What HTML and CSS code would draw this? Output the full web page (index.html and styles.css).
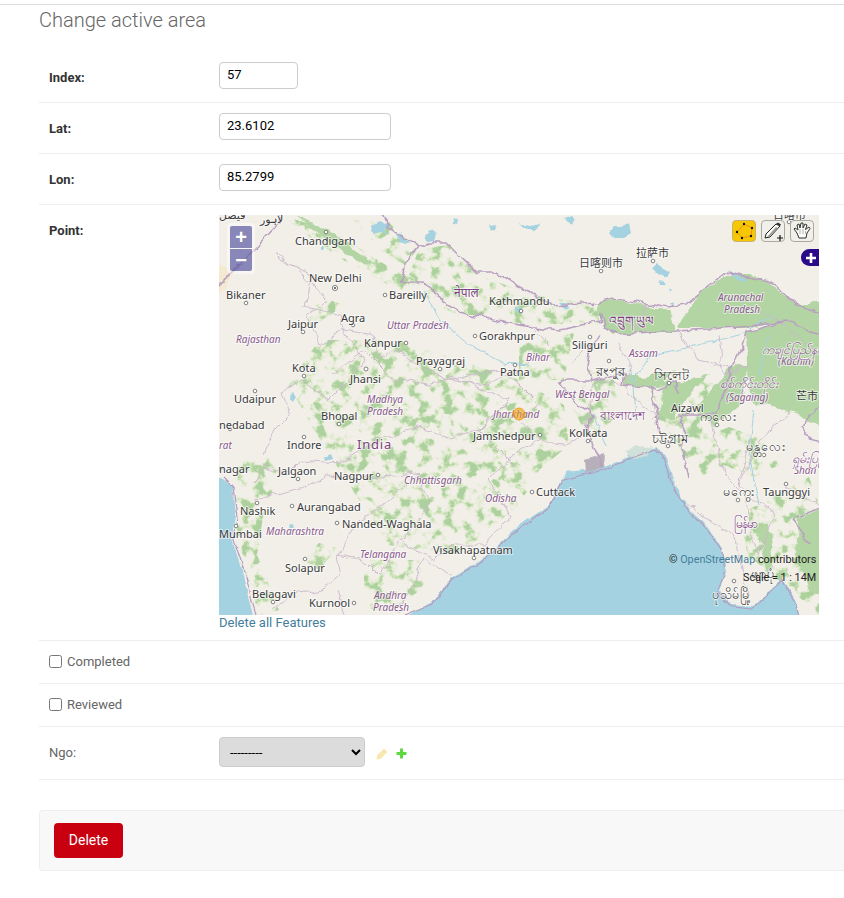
FILE: index.html
```html
<!DOCTYPE html>
<html lang="en">
<head>
<meta charset="utf-8">
<title>Change active area</title>
<link rel="stylesheet" href="styles.css">
</head>
<body>
<div class="topline"></div>
<main class="content">
  <h1 class="title">Change active area</h1>
  <form class="form">
    <div class="row">
      <label class="label strong">Index:</label>
      <input class="input short" type="text" value="57">
    </div>
    <div class="row">
      <label class="label strong">Lat:</label>
      <input class="input long" type="text" value="23.6102">
    </div>
    <div class="row">
      <label class="label strong">Lon:</label>
      <input class="input long" type="text" value="85.2799">
    </div>
    <div class="row maprow">
      <label class="label strong">Point:</label>
      <div class="mapcol">
        <div class="map">
          <svg class="mapsvg" viewBox="0 0 600 400" width="600" height="400">
            <defs>
              <filter id="rough" filterUnits="userSpaceOnUse" x="-30" y="-30" width="660" height="460" color-interpolation-filters="sRGB">
                <feTurbulence type="fractalNoise" baseFrequency=".07" numOctaves="3" seed="4" result="n"/>
                <feDisplacementMap in="SourceGraphic" in2="n" scale="9" xChannelSelector="R" yChannelSelector="G"/>
                <feGaussianBlur stdDeviation=".35"/>
              </filter>
              <filter id="finer" filterUnits="userSpaceOnUse" x="-30" y="-30" width="660" height="460" color-interpolation-filters="sRGB">
                <feTurbulence type="fractalNoise" baseFrequency=".1" numOctaves="3" seed="9" result="n"/>
                <feDisplacementMap in="SourceGraphic" in2="n" scale="5" xChannelSelector="R" yChannelSelector="G"/>
                <feGaussianBlur stdDeviation=".3"/>
              </filter>
              <filter id="mottlelight" filterUnits="userSpaceOnUse" x="-30" y="-30" width="660" height="460" color-interpolation-filters="sRGB">
                <feTurbulence type="fractalNoise" baseFrequency=".085" numOctaves="4" seed="7" result="n"/>
                <feColorMatrix in="n" type="matrix" values="0 0 0 0 0  0 0 0 0 0  0 0 0 0 0  9 0 0 0 -4.3" result="a"/>
                <feComposite in="SourceGraphic" in2="a" operator="in"/>
                <feGaussianBlur stdDeviation=".45"/>
              </filter>
              <filter id="mottledark" filterUnits="userSpaceOnUse" x="-30" y="-30" width="660" height="460" color-interpolation-filters="sRGB">
                <feTurbulence type="fractalNoise" baseFrequency=".085" numOctaves="4" seed="7" result="n"/>
                <feColorMatrix in="n" type="matrix" values="0 0 0 0 0  0 0 0 0 0  0 0 0 0 0  10 0 0 0 -5.7" result="a"/>
                <feComposite in="SourceGraphic" in2="a" operator="in"/>
                <feGaussianBlur stdDeviation=".45"/>
              </filter>
              <g id="veg">
                <path d="M62 0L100 12 135 30 170 52 200 66 240 85 262 100 240 100 205 85 170 70 135 52 95 25Z"/>
                <path d="M135 5L170 8 200 32 186 50 165 38Z"/>
                <path d="M200 34L230 30 265 62 300 75 300 108 262 100 225 82 190 60Z"/>
                <path d="M300 78L380 90 380 110 300 108Z"/>
                <path d="M85 95L110 85 125 90 100 108 85 110Z"/>
                <path d="M100 125L180 125 300 165 345 190 350 230 320 255 300 290 240 340 170 330 125 262 95 215 70 170Z"/>
                <path d="M20 250L45 235 60 260 45 295 38 340 60 395 40 400 25 350 15 300Z"/>
                <path d="M85 345L100 328 118 333 100 355Z"/>
                <path d="M145 345L200 345 205 372 170 398 145 392Z"/>
                <path d="M300 130L355 118 345 165 300 165Z"/>
                <path d="M370 155L395 165 400 200 370 225 355 195Z"/>
                <path d="M430 160L505 170 495 215 480 262 460 232 440 205Z"/>
                <path d="M460 232L510 212 545 225 560 250 535 262 505 250 480 262Z"/>
                <path d="M520 300L590 262 600 290 590 340 530 345Z"/>
                <path d="M535 345L580 340 600 362 600 400 580 382Z"/>
                <path d="M335 205L345 225 320 255 305 262 320 225Z"/>
              </g>
            </defs>
            <rect width="600" height="400" fill="#f2efe9"/>
            <path class="desert" d="M-20 45L16 55 6 74 -20 90Z" filter="url(#finer)"/>
            <use href="#veg" class="vegl" filter="url(#mottlelight)"/>
            <use href="#veg" class="vegd" filter="url(#mottledark)"/>
            <g class="wood" filter="url(#rough)">
              <path d="M380 87L394 84 450 96 456 114 450 118 395 120 385 113 380 100Z"/>
              <path d="M457 113L480 80 507 60 533 60 557 73 577 90 620 84 620 125 567 107 527 113 500 113Z"/>
              <path d="M527 117L567 107 620 120 620 215 570 198 533 187 528 150Z"/>
              <path d="M403 158L425 162 457 155 440 172 405 170Z"/>
              <path d="M477 193L512 153 530 150 522 190 495 212 480 198Z"/>
              <path d="M445 172L490 158 470 180 452 205 440 198Z"/>
              <path d="M580 305L620 285 620 390 590 375 578 340Z"/>
              <path d="M540 312L548 310 555 345 548 360Z"/>
              <path d="M75 0L110 15 140 38 160 52 145 48 110 28Z"/>
            </g>
            <g class="river" filter="url(#finer)">
              <path d="M410 170L430 142 520 120 555 100"/>
              <path d="M417 205L415 170 410 150"/>
              <path d="M205 75L220 105 250 130 285 148 310 150"/>
              <path d="M375 198L387 232"/>
              <path d="M550 120L540 160"/>
              <path d="M535 195L530 240 540 290"/>
            </g>
            <g class="water" filter="url(#finer)">
              <path d="M-20 255L0 263 13 270 16 300 13 323 23 357 39 420 -20 420Z"/>
              <path d="M175 420L190 400 213 387 233 363 260 347 287 323 300 310 330 290 343 263 347 257 383 253 407 243 437 232 447 243 457 273 470 293 490 313 503 333 507 357 500 377 513 390 533 392 563 363 577 387 585 420Z"/>
              <path d="M-20 240L8 255 -20 262Z"/>
              <path d="M153 10l7-4 5 3 5-1 1 5-6 1 3 5-7-2-6 2-2-5z"/>
              <path d="M178 20l4-3 3 6 6 4-5 2-6-3z"/>
              <path d="M206 20l8-5 4 5-2 6-7 1z"/>
              <path d="M234 3l5 1-1 5-4-1z"/>
              <path d="M270 10l7-1-2 5-3 2z"/>
              <path d="M300 8l10 3 12-2-6 6-8 0z"/>
              <path d="M345 4l8-4 4 4-5 5z"/>
              <path d="M390 18l5-6 8 0 7-4 2 10-8 5-10 0z"/>
              <path d="M432 52l6-4 5 6 8 4-4 4-8-3z"/>
              <path d="M440 66l4 1 2 3-5 0z"/>
              <path d="M510 56l8 4 6 2 3 4-9-2z"/>
              <path d="M450 73l3 2-2 2z"/>
              <path d="M520 15l6-4 3 6-5 3z"/>
              <path d="M295 90l6 2 3 4-5 1-4-3z"/>
              <path d="M340 88l7 0 3 4-5 2z"/>
              <path d="M452 88l4 0-1 5z"/>
              <path d="M72 177l5 5-3 5-3-3z"/>
              <path d="M102 30l3 4-3 2z"/>
              <path d="M70 310l3-1 2 3-3 3z"/>
              <path d="M105 242l7-3 2 5-7 2z"/>
              <path d="M408 240l8-2 4 3-9 3z"/>
            </g>
            <path class="delta" d="M366 244l20-6-1 15-18 5z" filter="url(#finer)"/>
            <path class="deltaw" d="M407 238l9-8 10 3 8-2-6 10-12 4z" filter="url(#finer)"/>
            <g class="state" filter="url(#rough)">
              <path d="M55 38L70 48 96 62 85 90 122 100 125 115 155 120 160 145 175 135 230 165 268 170 300 155 310 145"/>
              <path d="M60 38L85 60 108 85 88 100 100 130 125 115 145 145 130 165 110 185 85 165 62 175 70 200 55 215 45 240"/>
              <path d="M113 160L145 135 175 165 210 170 232 162 255 170 290 185 262 215 230 222 200 212 165 222 120 248 80 245 65 260 45 250 35 268"/>
              <path d="M35 285L80 275 108 260 150 262 198 258 210 290 195 310 180 328 160 360 145 345 118 340 122 360 105 375 72 380 55 395"/>
              <path d="M120 340L135 310 165 290 200 258"/>
              <path d="M118 375L125 400"/>
              <path d="M180 325L215 345 235 330 265 330 292 300 270 265 293 240 320 225 350 230 368 215 375 165"/>
              <path d="M232 360L205 345 185 385 180 400"/>
              <path d="M230 165L280 155 300 170 320 190 298 205 320 225"/>
              <path d="M290 185L260 215 295 250"/>
              <path d="M375 165L405 170 412 150 400 128"/>
              <path d="M405 170L420 188 440 200 435 205"/>
              <path d="M460 115L480 145 512 153"/>
              <path d="M500 120L505 160 530 150"/>
              <path d="M456 210L475 190"/>
              <path d="M530 225L520 270 555 300 540 340"/>
              <path d="M570 198L540 225 520 270"/>
              <path d="M565 272L600 290"/>
              <path d="M490 200L505 260 525 280 540 340"/>
              <path d="M470 290L515 322 530 385"/>
              <path d="M555 105L578 120 600 140"/>
              <path d="M540 95L558 105"/>
              <path d="M400 100L420 115"/>
              <path d="M425 90L425 118"/>
              <path d="M330 130L310 110"/>
              <path d="M352 150L360 140 372 128"/>
            </g>
            <g class="nation" filter="url(#rough)">
              <path d="M160 -10L170 13 200 32 186 50 182 67 207 67 217 83 240 97 267 103 300 110 340 115 380 107 383 100 385 113 400 120 458 116 520 112 567 107 527 117 520 140 513 153 500 193 495 200 460 200 467 220 460 230 470 262"/>
              <path d="M200 32L210 28 227 28 257 57 277 57 300 72 333 90 380 87 393 83 450 93 467 90 507 57 557 70 577 90 620 105"/>
              <path d="M57 -10L60 8 37 33 20 50 -15 85"/>
              <path d="M383 120L372 130 368 150 372 165 405 158 403 170 430 172 437 190 442 225"/>
              <path d="M372 165L350 165 340 168 352 185 375 200 368 215 378 238 384 253"/>
              <path d="M430 172L438 175 456 168 460 178"/>
              <path d="M567 107L620 125"/>
              <path d="M575 305L620 285"/>
              <path d="M575 305L590 330"/>
              <path d="M620 175L582 210 590 225 620 232"/>
            </g>
            <g class="coast" filter="url(#finer)">
              <path d="M5 263L14 272 18 302 15 325 26 358 42 420"/>
              <path d="M172 420L186 400 213 389 233 365 260 349 287 325 330 292 343 265 385 255 407 245 437 234 445 245 455 275 470 296 490 316 503 336 505 360 498 378 513 392 533 394 563 365 577 390 585 420"/>
            </g>
            <g class="dots">
              <circle cx="107" cy="17" r="1.8"/>
              <circle cx="27" cy="88" r="1.8"/>
              <circle cx="166" cy="80" r="1.8"/>
              <circle cx="84" cy="117" r="1.8"/>
              <circle cx="134" cy="110" r="1.8"/>
              <circle cx="256" cy="121" r="1.8"/>
              <circle cx="187" cy="128" r="1.8"/>
              <circle cx="221" cy="154" r="1.8"/>
              <circle cx="85" cy="161" r="1.8"/>
              <circle cx="147" cy="154" r="2"/>
              <circle cx="36" cy="176" r="1.8"/>
              <circle cx="11" cy="214" r="1.8"/>
              <circle cx="120" cy="209" r="1.8"/>
              <circle cx="85" cy="222" r="1.8"/>
              <circle cx="79" cy="264" r="1.8"/>
              <circle cx="159" cy="260" r="1.8"/>
              <circle cx="73" cy="291" r="1.8"/>
              <circle cx="118" cy="308" r="1.8"/>
              <circle cx="38" cy="288" r="1.8"/>
              <circle cx="17" cy="311" r="1.8"/>
              <circle cx="86" cy="344" r="1.8"/>
              <circle cx="54" cy="387" r="1.8"/>
              <circle cx="135" cy="388" r="1.8"/>
              <circle cx="255" cy="343" r="1.8"/>
              <circle cx="296" cy="150" r="1.8"/>
              <circle cx="302" cy="96" r="1.8"/>
              <circle cx="371" cy="122" r="1.8"/>
              <circle cx="390" cy="146" r="1.8"/>
              <circle cx="450" cy="168" r="1.8"/>
              <circle cx="469" cy="197" r="1.8"/>
              <circle cx="498" cy="210" r="1.8"/>
              <circle cx="545" cy="240" r="1.8"/>
              <circle cx="519" cy="285" r="1.8"/>
              <circle cx="567" cy="269" r="1.8"/>
              <circle cx="449" cy="231" r="1.8"/>
              <circle cx="369" cy="226" r="1.8"/>
              <circle cx="321" cy="220" r="1.8"/>
              <circle cx="313" cy="277" r="1.8"/>
              <circle cx="515" cy="366" r="1.8"/>
              <circle cx="382" cy="56" r="1.8"/>
              <circle cx="434" cy="46" r="1.8"/>
              <circle cx="570" cy="7" r="1.8"/>
              <circle cx="116" cy="73" r="2.6"/>
            </g>
            <circle class="dotinner" cx="116" cy="73" r="1"/>
            <g class="city">
              <text x="76" y="30">Chandigarh</text>
              <text x="90" y="67">New Delhi</text>
              <text x="7" y="84">Bikaner</text>
              <text x="170" y="84">Bareilly</text>
              <text x="270" y="90">Kathmandu</text>
              <text x="69" y="113">Jaipur</text>
              <text x="122" y="107">Agra</text>
              <text x="260" y="125">Gorakhpur</text>
              <text x="145" y="132">Kanpur</text>
              <text x="197" y="150">Prayagraj</text>
              <text x="73" y="157">Kota</text>
              <text x="131" y="168">Jhansi</text>
              <text x="281" y="161">Patna</text>
              <text x="353" y="134">Siliguri</text>
              <text x="15" y="188">Udaipur</text>
              <text x="102" y="205">Bhopal</text>
              <text x="350" y="222">Kolkata</text>
              <text x="254" y="225">Jamshedpur</text>
              <text x="452" y="197">Aizawl</text>
              <text x="68" y="234">Indore</text>
              <text x="59" y="260">Jalgaon</text>
              <text x="115" y="265">Nagpur</text>
              <text x="317" y="281">Cuttack</text>
              <text x="21" y="300">Nashik</text>
              <text x="78" y="296">Aurangabad</text>
              <text x="123" y="313">Nanded-Waghala</text>
              <text x="0" y="323">Mumbai</text>
              <text x="214" y="339">Visakhapatnam</text>
              <text x="66" y="357">Solapur</text>
              <text x="33" y="383">Belagavi</text>
              <text x="90" y="392">Kurnool</text>
              <text x="544" y="281">Taunggyi</text>
              <text x="0" y="214">nedabad</text>
              <text x="0" y="258">nagar</text>
              <text x="360" y="52">日喀则市</text>
              <text x="417" y="42">拉萨市</text>
              <text x="577" y="185">芒市</text>
              <text x="554" y="4">日喀市</text>
              <text class="wide" x="377" y="161">রংপুর</text>
              <text class="wide" x="435" y="165">সিলেট</text>
              <text class="wide" x="433" y="228">চট্টগ্রাম</text>
              <text class="wide" x="481" y="206">ကလေး</text>
              <text class="wide" x="527" y="236">မန္တလေး</text>
              <text class="wide" x="504" y="281">မကွေး</text>
              <text class="wide" x="493" y="384">ပုသိမ်မြို့</text>
              <text class="wide" x="532" y="363">ဖျာပုံ</text>
              <text x="41" y="8">لاہور</text>
              <text x="0" y="4">فیصل</text>
            </g>
            <g class="region">
              <text x="17" y="128">Rajasthan</text>
              <text x="168" y="114">Uttar Pradesh</text>
              <text x="307" y="146">Bihar</text>
              <text x="148" y="188">Madhya</text>
              <text x="148" y="200">Pradesh</text>
              <text x="336" y="183">West Bengal</text>
              <text x="274" y="203">Jharkhand</text>
              <text x="410" y="142">Assam</text>
              <text x="499" y="86">Arunachal</text>
              <text x="505" y="98">Pradesh</text>
              <text x="559" y="150">(Kachin)</text>
              <text x="507" y="186">(Sagaing)</text>
              <text x="575" y="259">Shan</text>
              <text x="185" y="269">Chhattisgarh</text>
              <text x="266" y="287">Odisha</text>
              <text x="47" y="320">Maharashtra</text>
              <text x="141" y="343">Telangana</text>
              <text x="155" y="384">Andhra</text>
              <text x="154" y="396">Pradesh</text>
              <text x="0" y="234">rat</text>
              <text class="wide" x="543" y="139">ကချင်ပြည်နယ်</text>
              <text class="wide" x="501" y="173">စစ်ကိုင်းတိုင်း</text>
              <text class="wide" x="573" y="248">ရှမ်းပြည်</text>
            </g>
            <g class="country">
              <text x="138" y="234" class="india">India</text>
              <text x="235" y="82">नेपाल</text>
              <text x="390" y="110">འབྲུག་ཡུལ</text>
              <text x="381" y="205">বাংলাদেশ</text>
              <text x="515" y="313">မြန်မာ</text>
            </g>
            <circle class="marker" cx="300" cy="199" r="6"/>
            <text class="attr" x="450" y="348">©&#160;<tspan class="osm">OpenStreetMap</tspan> contributors</text>
            <text class="attr" x="524" y="366">Scale = 1 : 14M</text>
          </svg>
          <div class="zoom">
            <button class="zoombtn" type="button">+</button>
            <button class="zoombtn" type="button">−</button>
          </div>
          <div class="tools">
            <span class="tool active">
              <svg viewBox="0 0 24 22" width="24" height="22">
                <path d="M5 12L12 4 20 8 19 16 10 18Z" fill="none" stroke="#f08030" stroke-width=".8"/>
                <circle cx="5" cy="12" r="1.2"/>
                <circle cx="12" cy="4" r="1.2"/><circle cx="20" cy="8" r="1.2"/><circle cx="19" cy="16" r="1.2"/><circle cx="10" cy="18" r="1.2"/>
              </svg>
            </span>
            <span class="tool">
              <svg viewBox="0 0 24 22" width="24" height="22">
                <path d="M4 18L5 14 15 4 19 6 9 17Z" fill="#fff" stroke="#222" stroke-width="1"/>
                <path d="M6 17L15 7 17 8 8 17Z" fill="#9a9a96"/>
                <path d="M15 4L17 2.500 20 4.500 19 6Z" fill="#333"/>
                <path d="M16 18h6M19 15v6" stroke="#111" stroke-width="1.2"/>
              </svg>
            </span>
            <span class="tool">
              <svg viewBox="0 0 24 22" width="24" height="22">
                <path d="M7 13L4 9 5 8 8 10 7 5 9 4 10 8 11 3 13 3 13 8 15 4 17 5 15.500 9.500 19 7 20 8.500 17 13 16 18 9 18Z" fill="#fbfbf5" stroke="#333" stroke-width="1"/>
                <path d="M10 9v5M13 9v5M15.500 11v3" stroke="#999" stroke-width=".7"/>
              </svg>
            </span>
          </div>
          <span class="layerbtn">
            <svg viewBox="0 0 12 12" width="12" height="12"><path d="M6 1v10M1 6h10" stroke="#fff" stroke-width="2.600"/></svg>
          </span>
        </div>
        <a class="clear" href="#">Delete all Features</a>
      </div>
    </div>
    <div class="row checkrow">
      <input class="check" type="checkbox" id="completed">
      <label class="checklabel" for="completed">Completed</label>
    </div>
    <div class="row checkrow">
      <input class="check" type="checkbox" id="reviewed">
      <label class="checklabel" for="reviewed">Reviewed</label>
    </div>
    <div class="row selectrow">
      <label class="label plain">Ngo:</label>
      <select class="select"><option>---------</option></select>
      <svg class="pencil" viewBox="0 0 12 12" width="12" height="12"><path d="M0.500 11.500L1 7.500 8 0.500 11.500 4 4.500 11Z" fill="#f8e8b0"/></svg>
      <svg class="plus" viewBox="0 0 11 11" width="11" height="11"><path d="M5.500 0.500v10M0.500 5.500h10" stroke="#5fd940" stroke-width="3"/></svg>
    </div>
    <div class="submit">
      <a class="delete" href="#">Delete</a>
    </div>
  </form>
</main>
</body>
</html>
```
FILE: styles.css
```css
html, body {
  margin: 0;
  padding: 0;
  background: #fff;
}
body {
  font-family: Roboto, "Liberation Sans", sans-serif;
  font-size: 13px;
  color: #333;
  height: 898px;
  overflow: hidden;
}
.topline {
  height: 4px;
  border-bottom: 1px solid #dcdce2;
}
.content {
  padding-left: 39px;
}
.title {
  margin: 0;
  height: 47px;
  padding-top: 4px;
  box-sizing: border-box;
  font-size: 20px;
  line-height: 22px;
  font-weight: 300;
  color: #666;
}
.row {
  display: flex;
  align-items: flex-start;
  padding: 10px 10px 13px;
  border-bottom: 1px solid #eee;
}
.label {
  width: 170px;
  flex: none;
  padding-top: 8px;
  font-size: 13px;
  line-height: 16px;
}
.strong {
  font-weight: 700;
  color: #333;
}
.plain {
  color: #666;
}
.input {
  box-sizing: border-box;
  height: 27px;
  padding: 0 7px 3px;
  border: 1px solid #ccc;
  border-radius: 4px;
  background: #fff;
  font-family: Roboto, sans-serif;
  font-size: 13px;
  color: #000;
  outline: none;
}
.short {
  width: 79px;
}
.long {
  width: 172px;
}
.maprow {
  padding-bottom: 10px;
}
.map {
  position: relative;
  width: 600px;
  height: 400px;
  overflow: hidden;
}
.mapsvg {
  display: block;
}
.clear {
  display: block;
  height: 15px;
  line-height: 15px;
  font-size: 13px;
  color: #447e9b;
  text-decoration: none;
}
.desert { fill: #f4ead0; }
.vegl { fill: #d8e8c4; }
.vegd { fill: #add19e; }
.wood path { fill: #b3d5a3; }
.water path { fill: #a5d2e0; }
.delta { fill: #b7b0bb; }
.deltaw { fill: #cfe1d8; }
.river path {
  fill: none;
  stroke: #a5d2e0;
  stroke-width: 1;
}
.state path {
  fill: none;
  stroke: #cbb8cc;
  stroke-width: .9;
}
.nation path {
  fill: none;
  stroke: #b9a0c0;
  stroke-width: 1.6;
}
.coast path {
  fill: none;
  stroke: #b49cc0;
  stroke-width: 1.2;
}
.dots circle {
  fill: #fff;
  stroke: #666;
  stroke-width: .8;
}
.dotinner { fill: #444; }
.city text,
.region text,
.country text {
  font-family: "Noto Sans", "Noto Sans CJK SC", "DejaVu Sans", sans-serif;
  paint-order: stroke;
  stroke: #fff;
  stroke-opacity: .6;
  stroke-width: 2px;
  stroke-linejoin: round;
}
.city text {
  font-size: 11px;
  fill: #3a3a3a;
}
.region text {
  font-size: 10px;
  font-style: italic;
  fill: #8a5a8e;
}
.country text {
  font-size: 12px;
  fill: #7d3f82;
}
.city .wide,
.region .wide {
  font-size: 12.5px;
}
.country .india {
  font-size: 13px;
  letter-spacing: .8px;
}
.marker {
  fill: #ee9900;
  fill-opacity: .55;
  stroke: #ee9900;
  stroke-opacity: .8;
}
.attr {
  font-family: Roboto, sans-serif;
  font-size: 10.8px;
  fill: #222;
}
.osm {
  fill: #447e9b;
}
.zoom {
  position: absolute;
  left: 8px;
  top: 8px;
  display: flex;
  flex-direction: column;
  gap: 1px;
  padding: 3px;
  border-radius: 4px;
  background: rgba(255, 255, 255, .45);
}
.zoombtn {
  width: 22px;
  height: 22px;
  padding: 0;
  border: 0;
  background: rgba(0, 0, 110, .45);
  color: #fff;
  font-family: "Liberation Sans", sans-serif;
  font-size: 20px;
  font-weight: 700;
  line-height: 20px;
}
.zoombtn:first-child { border-radius: 2px 2px 0 0; }
.zoombtn:last-child { border-radius: 0 0 2px 2px; }
.tools {
  position: absolute;
  top: 5px;
  right: 5px;
  display: flex;
  gap: 5px;
}
.tool {
  display: block;
  box-sizing: border-box;
  width: 24px;
  height: 22px;
  border: 1px solid #a9a9a0;
  border-radius: 4px;
  background: #f0efe9;
  overflow: hidden;
}
.tool svg {
  display: block;
  margin: -1px;
}
.tool.active {
  background: #f6c802;
  border-color: #c9b070;
}
.tool.active circle { fill: #111; }
.layerbtn {
  position: absolute;
  top: 34px;
  right: 0;
  width: 18px;
  height: 17px;
  display: flex;
  align-items: center;
  justify-content: flex-end;
  padding-right: 2px;
  box-sizing: border-box;
  border-radius: 9px 0 0 9px;
  background: #2b0a8a;
}
.checkrow {
  align-items: center;
  height: 40px;
  padding-top: 0;
  padding-bottom: 2px;
}
.check {
  margin: 0 5px 0 0;
  width: 13px;
  height: 13px;
}
.checklabel {
  color: #666;
  font-size: 13px;
}
.selectrow {
  align-items: center;
  padding-top: 10px;
  padding-bottom: 12px;
}
.selectrow .label {
  padding-top: 1px;
}
.select {
  box-sizing: border-box;
  width: 146px;
  height: 30px;
  padding: 0 6px;
  border: 1px solid #ccc;
  border-radius: 4px;
  background-color: #dcdcdc;
  font-family: Roboto, sans-serif;
  font-size: 13px;
  color: #000;
}
.pencil {
  margin: 3px 0 0 11px;
}
.plus {
  margin: 3px 0 0 8px;
}
.submit {
  margin-top: 30px;
  height: 61px;
  box-sizing: border-box;
  padding: 12px 14px;
  border: 1px solid #eee;
  border-right: 0;
  border-radius: 4px 0 0 4px;
  background: #f8f8f8;
}
.delete {
  display: block;
  width: 69px;
  height: 35px;
  border-radius: 4px;
  background: #c80010;
  color: #fff;
  font-size: 14px;
  line-height: 35px;
  text-align: center;
  text-decoration: none;
}
```
